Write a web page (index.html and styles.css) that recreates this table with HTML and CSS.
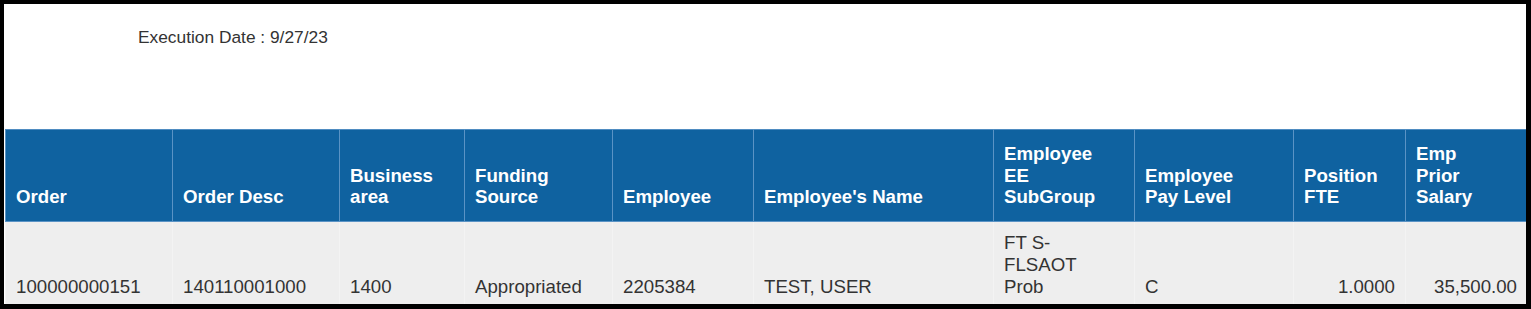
FILE: index.html
```html
<!DOCTYPE html>
<html lang="en">
<head>
<meta charset="utf-8">
<title>Report</title>
<link rel="stylesheet" href="styles.css">
</head>
<body>
<div class="frame">
  <div class="report-head">Execution Date : 9/27/23</div>
  <div class="grid">
    <div class="th">Order</div>
    <div class="th">Order Desc</div>
    <div class="th">Business area</div>
    <div class="th">Funding Source</div>
    <div class="th">Employee</div>
    <div class="th">Employee's Name</div>
    <div class="th">Employee EE SubGroup</div>
    <div class="th">Employee Pay Level</div>
    <div class="th">Position FTE</div>
    <div class="th">Emp Prior Salary</div>

    <div class="td">100000000151</div>
    <div class="td">140110001000</div>
    <div class="td">1400</div>
    <div class="td">Appropriated</div>
    <div class="td">2205384</div>
    <div class="td">TEST, USER</div>
    <div class="td wrap">FT S-FLSAOT Prob</div>
    <div class="td">C</div>
    <div class="td num">1.0000</div>
    <div class="td num">35,500.00</div>
  </div>
</div>
</body>
</html>
```
FILE: styles.css
```css
html {
  background: #000;
}
body {
  margin: 0;
  font-family: "Liberation Sans", Arial, sans-serif;
}
.frame {
  margin: 4px 5px 0 4px;
  height: 300px;
  overflow: hidden;
  background: #fff;
}
.report-head {
  box-sizing: border-box;
  height: 125px;
  padding: 23px 0 0 134px;
  font-size: 17.33px;
  color: #333;
}
.grid {
  display: grid;
  grid-template-columns: 167px 167px 125px 148px 141px 240px 141px 159px 112px 122px;
  margin-left: 1px;
  width: max-content;
}
.th {
  box-sizing: border-box;
  display: flex;
  flex-direction: column;
  justify-content: flex-end;
  background: #0f62a0;
  color: #fff;
  font-weight: bold;
  font-size: 18.67px;
  line-height: 21.5px;
  border-top: 1px solid #4f8cc1;
  border-bottom: 1px solid #5a93c5;
  border-left: 1px solid #5a93c5;
  padding: 13px 25px 13px 10px;
}
.td {
  box-sizing: border-box;
  display: flex;
  flex-direction: column;
  justify-content: flex-end;
  background: #eeeeee;
  color: #333;
  font-size: 18.67px;
  line-height: 22px;
  border-left: 1px solid #f3f3f3;
  padding: 10px 10px 12px 10px;
}
.td.wrap {
  padding-right: 24px;
}
.td.num {
  text-align: right;
}
```
